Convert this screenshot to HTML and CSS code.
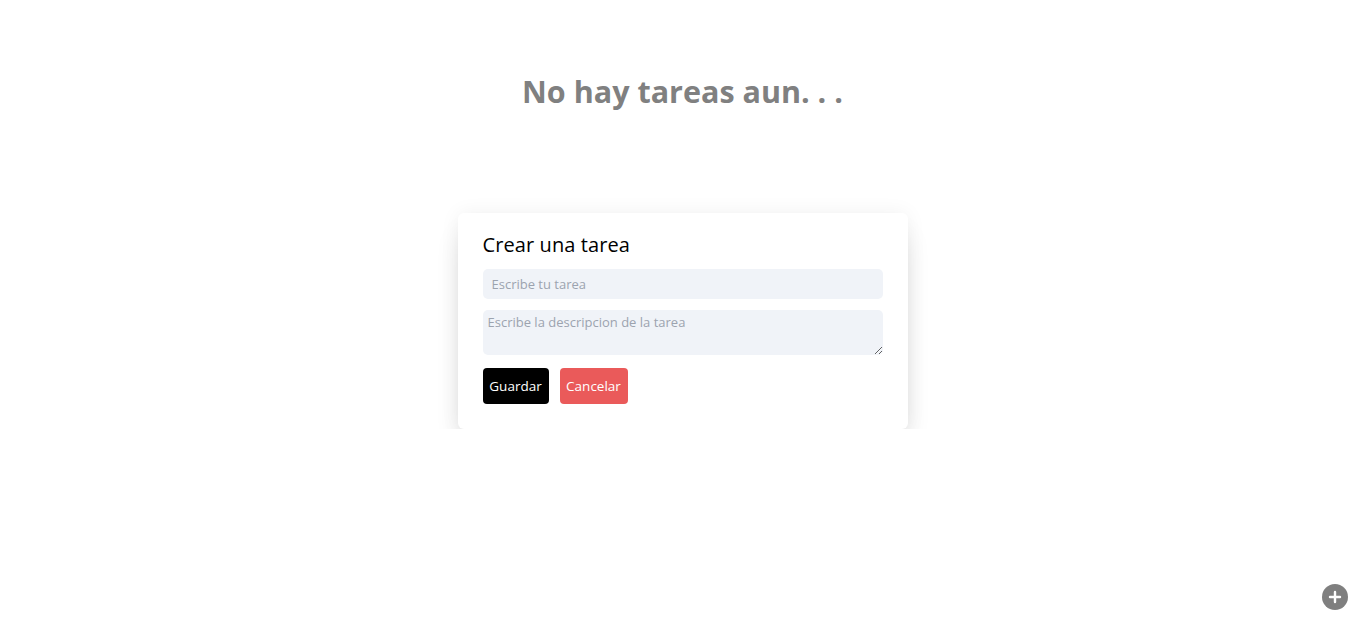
FILE: index.html
```html
<!DOCTYPE html>
<html lang="es">
<head>
<meta charset="utf-8">
<title>Tareas</title>
<link rel="stylesheet" href="styles.css">
</head>
<body>
<main class="page">
  <h1 class="empty">No hay tareas aun. . .</h1>
  <form class="card">
    <h2 class="card-title">Crear una tarea</h2>
    <input class="field" type="text" placeholder="Escribe tu tarea">
    <textarea class="field area" placeholder="Escribe la descripcion de la tarea"></textarea>
    <div class="actions">
      <button type="button" class="btn save">Guardar</button>
      <button type="button" class="btn cancel">Cancelar</button>
    </div>
  </form>
</main>
<button class="fab" type="button" aria-label="Agregar">
  <svg width="14" height="14" viewBox="0 0 14 14"><path d="M7 2v10M2 7h10" stroke="#fff" stroke-width="2.4" stroke-linecap="round"/></svg>
</button>
</body>
</html>
```
FILE: styles.css
```css
* { box-sizing: border-box; }
html, body { margin: 0; padding: 0; background: #fff; }
body { font-family: "Open Sans", "Noto Sans", sans-serif; color: #000; }
.page {
  display: flex;
  flex-direction: column;
  align-items: center;
  padding-top: 69px;
}
.empty {
  margin: 0;
  font-size: 30.5px;
  line-height: 44px;
  font-weight: 700;
  color: #808080;
}
.card {
  margin-top: 100px;
  width: 450px;
  background: #fff;
  border-radius: 6px;
  padding: 18px 25px 25px;
  box-shadow: 0 0 20px rgba(0,0,0,0.06), 0 18px 26px -6px rgba(0,0,0,0.16);
  display: flex;
  flex-direction: column;
}
.card-title {
  margin: 0 0 10px;
  font-size: 20px;
  line-height: 28px;
  font-weight: 400;
  letter-spacing: 0.1px;
}
.field {
  width: 400px;
  border: none;
  outline: none;
  background: #f0f3f8;
  border-radius: 5px;
  font-family: inherit;
  font-size: 13px;
  color: #333;
  padding: 0 9px;
  height: 30px;
}
.field::placeholder { color: #9ca3af; }
.area {
  margin-top: 11px;
  height: 45px;
  padding: 3px 5px;
  resize: vertical;
}
.actions {
  display: flex;
  gap: 11px;
  margin-top: 13px;
}
.btn {
  height: 36px;
  border: none;
  border-radius: 4px;
  color: #fff;
  font-family: inherit;
  font-size: 13.5px;
  font-weight: 500;
  padding: 0;
  cursor: pointer;
}
.save { background: #000; width: 66px; }
.cancel { background: #ea5a5a; width: 68px; }
.fab {
  position: fixed;
  right: 17px;
  bottom: 21px;
  width: 26px;
  height: 26px;
  border-radius: 50%;
  border: none;
  background: #7f7f7f;
  display: flex;
  align-items: center;
  justify-content: center;
  padding: 0;
}
```
